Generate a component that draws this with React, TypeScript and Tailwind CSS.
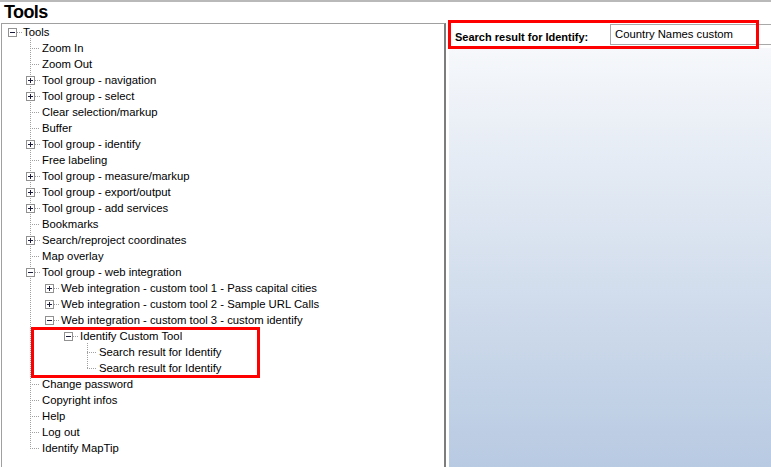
import React from "react";

type Node = {
	level: number;
	text: string;
	exp?: "plus" | "minus";
};

const nodes: Node[] = [
	{ level: 0, text: "Tools", exp: "minus" },
	{ level: 1, text: "Zoom In" },
	{ level: 1, text: "Zoom Out" },
	{ level: 1, text: "Tool group - navigation", exp: "plus" },
	{ level: 1, text: "Tool group - select", exp: "plus" },
	{ level: 1, text: "Clear selection/markup" },
	{ level: 1, text: "Buffer" },
	{ level: 1, text: "Tool group - identify", exp: "plus" },
	{ level: 1, text: "Free labeling" },
	{ level: 1, text: "Tool group - measure/markup", exp: "plus" },
	{ level: 1, text: "Tool group - export/output", exp: "plus" },
	{ level: 1, text: "Tool group - add services", exp: "plus" },
	{ level: 1, text: "Bookmarks" },
	{ level: 1, text: "Search/reproject coordinates", exp: "plus" },
	{ level: 1, text: "Map overlay" },
	{ level: 1, text: "Tool group - web integration", exp: "minus" },
	{ level: 2, text: "Web integration - custom tool 1 - Pass capital cities", exp: "plus" },
	{ level: 2, text: "Web integration - custom tool 2 - Sample URL Calls", exp: "plus" },
	{ level: 2, text: "Web integration - custom tool 3 - custom identify", exp: "minus" },
	{ level: 3, text: "Identify Custom Tool", exp: "minus" },
	{ level: 4, text: "Search result for Identify" },
	{ level: 4, text: "Search result for Identify" },
	{ level: 1, text: "Change password" },
	{ level: 1, text: "Copyright infos" },
	{ level: 1, text: "Help" },
	{ level: 1, text: "Log out" },
	{ level: 1, text: "Identify MapTip" },
];

const ROW = 16;
// expander centre per level, in panel coordinates
const cxs = [10, 28, 47, 66, 85];
const indent = ["pl-[21px]", "pl-[40px]", "pl-[59px]", "pl-[78px]", "pl-[97px]"];

function TreeLines() {
	const lastL1 = nodes.map((n) => n.level).lastIndexOf(1);
	const firstL4 = nodes.findIndex((n) => n.level === 4);
	const lastL4 = nodes.map((n) => n.level).lastIndexOf(4);
	const cy = (i: number) => i * ROW + 8 + 0.5;

	return (
		<svg
			className="absolute left-0 top-0"
			width={444}
			height={nodes.length * ROW + 4}
			shapeRendering="crispEdges"
		>
			{/* level 1 spine */}
			<line x1={28.5} y1={14} x2={28.5} y2={cy(lastL1)} stroke="#a0a0a0" strokeDasharray="1 1" />
			{/* level 4 spine */}
			<line x1={85.5} y1={cy(firstL4 - 1) + 6} x2={85.5} y2={cy(lastL4)} stroke="#a0a0a0" strokeDasharray="1 1" />
			{nodes.map((n, i) => {
				const cx = cxs[n.level];
				const y = cy(i);
				const start = n.exp ? cx + 5 : cx;
				return (
					<g key={i}>
						<line x1={start} y1={y} x2={cx + 10} y2={y} stroke="#a0a0a0" strokeDasharray="1 1" />
						{n.exp && (
							<g>
								<rect x={cx - 3.5} y={y - 4.5} width={8} height={8} fill="#fff" stroke="#919191" />
								<line x1={cx - 2} y1={y - 0.5} x2={cx + 3} y2={y - 0.5} stroke="#1a1a3a" />
								{n.exp === "plus" && (
									<line x1={cx + 0.5} y1={y - 3} x2={cx + 0.5} y2={y + 2} stroke="#1a1a3a" />
								)}
							</g>
						)}
					</g>
				);
			})}
		</svg>
	);
}

export default function App() {
	return (
		<div
			className="relative w-[771px] h-[467px] overflow-hidden bg-white text-black"
			style={{ fontFamily: '"Liberation Sans", Arial, sans-serif' }}
		>
			<div className="h-[2px] bg-[#b9b9b9]" />
			<div className="h-[21px] pl-[4px] text-[18px] leading-[21px] font-bold tracking-[-0.6px]">
				Tools
			</div>

			<div className="flex h-[444px]">
				{/* tree */}
				<div className="relative ml-[1px] w-[445px] shrink-0 border-l border-t border-[#a0a0a0] border-r-2 border-r-[#7d7d7d]">
					<TreeLines />
					<div className="relative">
						{nodes.map((n, i) => (
							<div key={i} className={`h-4 text-[11.3px] leading-4 whitespace-nowrap ${indent[n.level]}`}>
								{n.text}
							</div>
						))}
					</div>
				</div>

				<div className="w-[3px] shrink-0" />

				{/* details */}
				<div className="flex flex-1 flex-col">
					<div className="flex h-[25px] items-start pt-[1px] bg-white">
						<div className="w-[161px] shrink-0 pl-[6px] pt-[6px] text-[11px] leading-[14px] font-bold">
							Search result for Identify:
						</div>
						<div className="h-[21px] w-[170px] shrink-0 border border-[#a9a9a9] pl-[4px] text-[11.3px] leading-[19px]">
							Country Names custom
						</div>
					</div>
					<div className="flex-1 bg-linear-to-b from-[#f6f8fb] to-[#b8cae2]" />
				</div>
			</div>

			{/* highlight frames */}
			<div className="absolute left-[448px] top-[20px] w-[311px] h-[29px] border-[3px] border-[#ff0000]" />
			<div className="absolute left-[31px] top-[327px] w-[229px] h-[51px] border-[3px] border-[#ff0000]" />
		</div>
	);
}
